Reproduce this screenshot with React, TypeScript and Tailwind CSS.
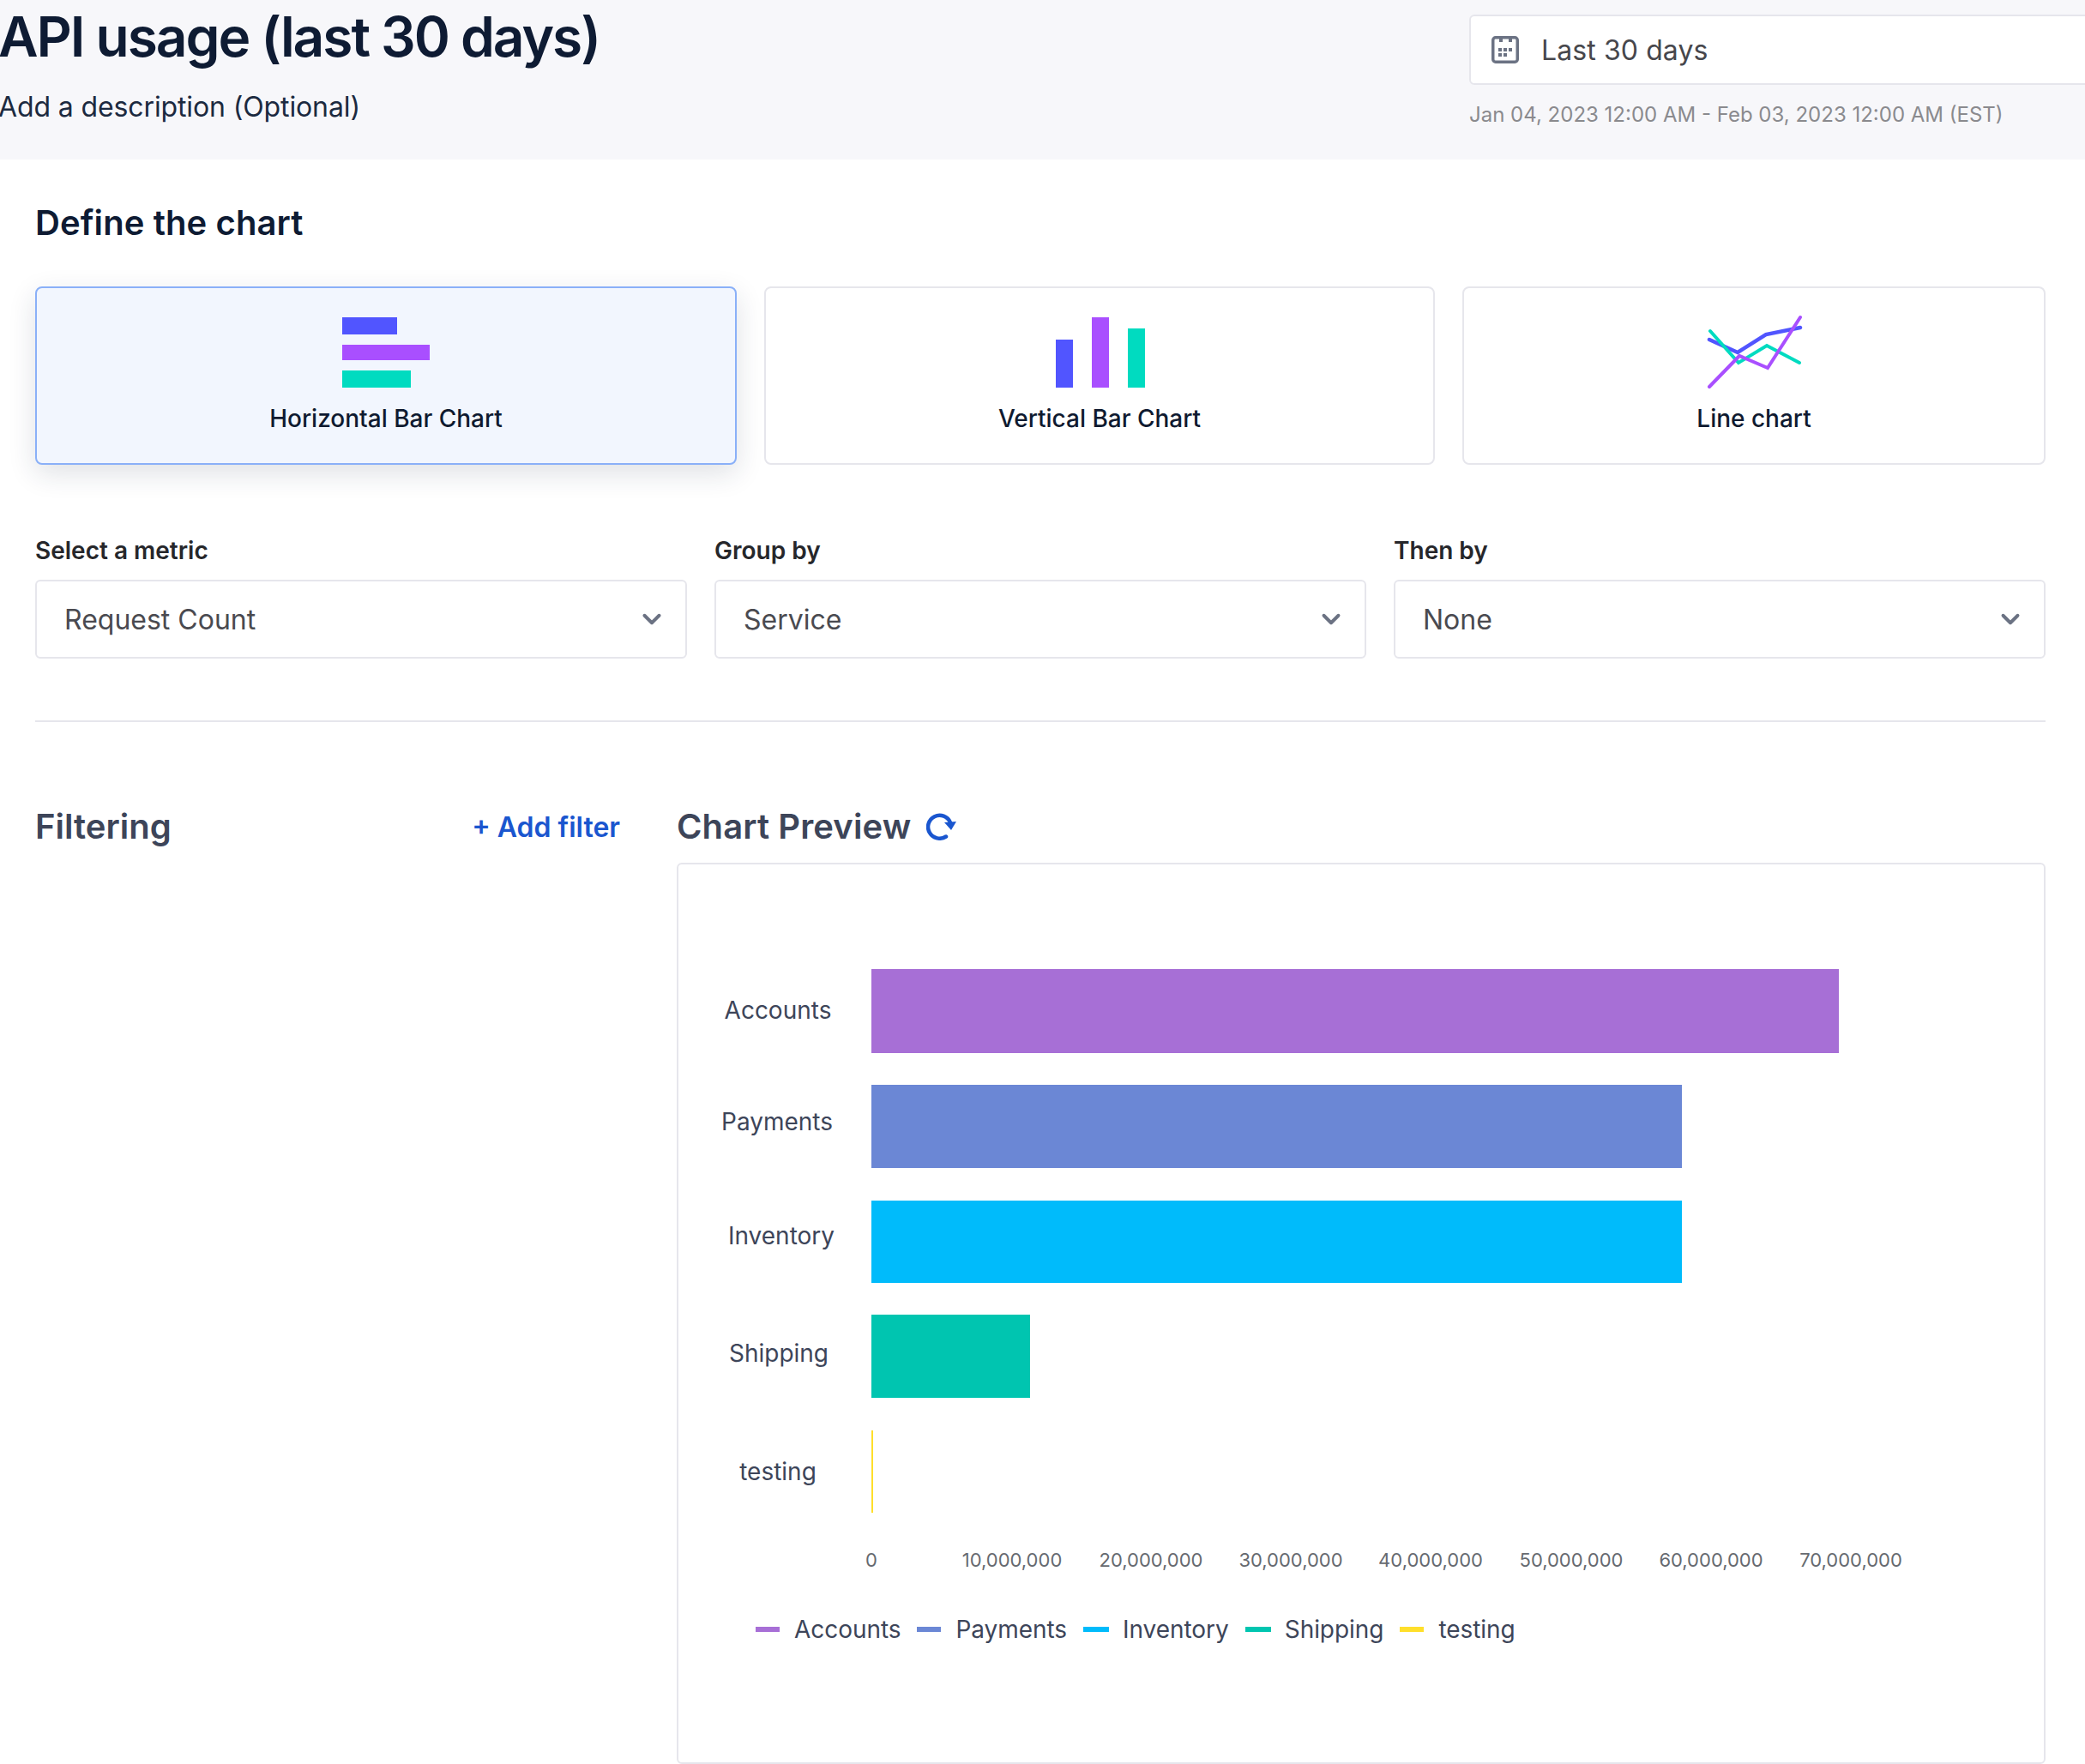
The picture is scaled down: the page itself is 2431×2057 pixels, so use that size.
import { ChevronDown } from 'lucide-react';

const series = [
  { name: 'Accounts', color: '#a76fd6', y: 1130, h: 98, end: 2144, labelX: 907, labelY: 1188, swatch: 'w-[28px]' },
  { name: 'Payments', color: '#6b87d5', y: 1265, h: 97, end: 1961, labelX: 906, labelY: 1318, swatch: 'w-[28px]' },
  { name: 'Inventory', color: '#00bbfb', y: 1400, h: 96, end: 1961, labelX: 911, labelY: 1451, swatch: 'w-[30px] -mr-[1px]' },
  { name: 'Shipping', color: '#00c5b0', y: 1533, h: 97, end: 1201, labelX: 908, labelY: 1588, swatch: 'w-[30px] -mr-[1px]' },
  { name: 'testing', color: '#ffdf2b', y: 1668, h: 96, end: 1018, labelX: 907, labelY: 1726, swatch: 'w-[28px]' },
];

const ticks = [
  { label: '0', x: 1016 },
  { label: '10,000,000', x: 1180 },
  { label: '20,000,000', x: 1342 },
  { label: '30,000,000', x: 1505 },
  { label: '40,000,000', x: 1668 },
  { label: '50,000,000', x: 1832 },
  { label: '60,000,000', x: 1995 },
  { label: '70,000,000', x: 2158 },
];

function CalendarIcon() {
  return (
    <svg width="32" height="32" viewBox="0 0 32 32" className="shrink-0">
      <rect x="1.75" y="1.75" width="28.5" height="28.5" rx="3" fill="none" stroke="#6b7283" strokeWidth="3.5" />
      <rect x="9" y="2" width="4" height="5" fill="#6b7283" />
      <rect x="20" y="2" width="4" height="5" fill="#6b7283" />
      <rect x="8" y="14" width="4" height="4" fill="#6b7283" />
      <rect x="14" y="14" width="4" height="4" fill="#6b7283" />
      <rect x="20" y="14" width="4" height="4" fill="#6b7283" />
      <rect x="8" y="20" width="4" height="4" fill="#6b7283" />
      <rect x="14" y="20" width="4" height="4" fill="#6b7283" />
    </svg>
  );
}

function RefreshIcon() {
  return (
    <svg width="36" height="32" viewBox="0 0 36 32" className="ml-[18px]">
      <path d="M23 27.5 A13.5 13.5 0 1 1 28 11" fill="none" stroke="#1a56cf" strokeWidth="4.5" strokeLinecap="round" />
      <path d="M21 11 L35 10 L29 20 Z" fill="#1a56cf" />
    </svg>
  );
}

function HorizontalBarIcon() {
  return (
    <div className="flex h-[82px] w-[102px] flex-col items-start">
      <div className="h-[20px] w-[64px] bg-[#5155ff]" />
      <div className="mt-[12px] h-[18px] w-[102px] bg-[#a94fff]" />
      <div className="mt-[12px] h-[20px] w-[80px] bg-[#00dbc0]" />
    </div>
  );
}

function VerticalBarIcon() {
  return (
    <div className="ml-[2px] flex h-[82px] items-end gap-[22px]">
      <div className="h-[56px] w-[20px] bg-[#5155ff]" />
      <div className="h-[82px] w-[20px] bg-[#a94fff]" />
      <div className="h-[69px] w-[20px] bg-[#00dbc0]" />
    </div>
  );
}

function LineIcon() {
  return (
    <svg width="108" height="82" viewBox="1993 369 108 82" className="ml-[2px] overflow-visible">
      <polyline points="1994,395 2027,410 2060,389 2100,381" fill="none" stroke="#5155ff" strokeWidth="4.5" strokeLinecap="round" />
      <polyline points="1995,385 2028,422 2061,402 2099,422" fill="none" stroke="#00dbc0" strokeWidth="4" strokeLinecap="round" />
      <polyline points="1994,450 2029,414 2062,428 2100,369" fill="none" stroke="#a94fff" strokeWidth="4" strokeLinecap="round" />
    </svg>
  );
}

function ChartCard({ label, active, icon }: { label: string; active?: boolean; icon: React.ReactNode }) {
  return (
    <div
      className={
        active
          ? 'flex h-[208px] flex-col items-center rounded-lg border-2 border-[#8ab0f8] bg-[#f2f6fe] pt-[34px] shadow-[0_10px_32px_rgba(30,40,70,0.14)]'
          : 'flex h-[208px] flex-col items-center rounded-lg border-2 border-[#e6e6ec] bg-white pt-[34px]'
      }
    >
      {icon}
      <div className="mt-[18px] text-[28px] leading-[36px] font-medium text-[#0f1a30]">{label}</div>
    </div>
  );
}

function SelectField({ label, value }: { label: string; value: string }) {
  return (
    <div>
      <div className="h-[34px] text-[28px] leading-[33px] font-semibold text-[#26272b]">{label}</div>
      <div className="mt-[16px] flex h-[92px] items-center justify-between rounded-md border-2 border-[#e6e6ec] bg-white pr-[22px] pl-[32px]">
        <span className="pt-[2px] text-[32px] text-[#4a4a50]">{value}</span>
        <ChevronDown size={34} strokeWidth={2.75} className="text-[#6b7283]" />
      </div>
    </div>
  );
}

export default function App() {
  return (
    <div className="h-[2057px] w-[2431px] overflow-hidden bg-white font-['Inter',sans-serif]">
      <header className="flex h-[186px] justify-between bg-[#f7f7fa]">
        <div className="-ml-[2px]">
          <h1 className="mt-[7px] text-[64px] leading-[72px] font-semibold tracking-[-2.05px] text-[#0e1b33]">
            API usage (last 30 days)
          </h1>
          <p className="mt-[26px] text-[32px] leading-[40px] tracking-[-0.12px] text-[#1c2a40]">
            Add a description (Optional)
          </p>
        </div>
        <div className="w-[718px] shrink-0 pt-[17px]">
          <div className="flex h-[82px] w-[800px] items-center gap-[26px] rounded-md border-2 border-[#e6e6ec] bg-white pl-[24px]">
            <CalendarIcon />
            <span className="pt-[2px] text-[32px] tracking-[0.1px] text-[#47474c]">Last 30 days</span>
          </div>
          <div className="mt-[19px] text-[24px] leading-[32px] text-[#8a8a8e]">
            Jan 04, 2023 12:00 AM - Feb 03, 2023 12:00 AM (EST)
          </div>
        </div>
      </header>

      <main className="pr-[46px] pl-[41px]">
        <h2 className="pt-[50px] text-[40px] leading-[48px] font-semibold tracking-[0.1px] text-[#0e1b33]">
          Define the chart
        </h2>

        <div className="mt-[50px] grid grid-cols-[818px_782px_680px] gap-[32px]">
          <ChartCard label="Horizontal Bar Chart" active icon={<HorizontalBarIcon />} />
          <ChartCard label="Vertical Bar Chart" icon={<VerticalBarIcon />} />
          <ChartCard label="Line chart" icon={<LineIcon />} />
        </div>

        <div className="mt-[84px] grid grid-cols-3 gap-[32px]">
          <SelectField label="Select a metric" value="Request Count" />
          <SelectField label="Group by" value="Service" />
          <SelectField label="Then by" value="None" />
        </div>

        <div className="mt-[72px] h-[2px] bg-[#e6e6ec]" />

        <div className="mt-[98px] flex gap-[67px]">
          <section className="w-[681px] shrink-0">
            <div className="flex h-[48px] items-center justify-between">
              <h3 className="text-[40px] leading-[48px] font-semibold text-[#3d4559]">Filtering</h3>
              <span className="-mr-[1px] pt-[2px] text-[32px] font-semibold text-[#1a56cf]">+ Add filter</span>
            </div>
          </section>

          <section className="flex-1">
            <div className="flex h-[48px] items-center">
              <h3 className="text-[40px] leading-[48px] font-semibold tracking-[0.1px] text-[#3d4559]">Chart Preview</h3>
              <RefreshIcon />
            </div>
            <div className="mt-[18px] h-[1051px] rounded-md border-2 border-[#e6e6ec] bg-white">
              <svg width="1592" height="831" viewBox="791 1008 1592 831" className="block">
                {series.map((s) => (
                  <g key={s.name}>
                    <rect x={1016} y={s.y} width={s.end - 1016} height={s.h} fill={s.color} />
                    <text x={s.labelX} y={s.labelY} textAnchor="middle" fontSize="28" fill="#3d4559">
                      {s.name}
                    </text>
                  </g>
                ))}
                {ticks.map((t) => (
                  <text key={t.label} x={t.x} y={1827} textAnchor="middle" fontSize="22" fill="#666a70">
                    {t.label}
                  </text>
                ))}
              </svg>
              <div className="mt-[43px] flex items-center gap-[19px] pl-[90px]">
                {series.map((s) => (
                  <div key={s.name} className="flex items-center gap-[17px]">
                    <span className={`h-[6px] ${s.swatch}`} style={{ backgroundColor: s.color }} />
                    <span className="text-[28px] leading-[36px] tracking-[-0.05px] text-[#3d4559]">{s.name}</span>
                  </div>
                ))}
              </div>
            </div>
          </section>
        </div>
      </main>
    </div>
  );
}
